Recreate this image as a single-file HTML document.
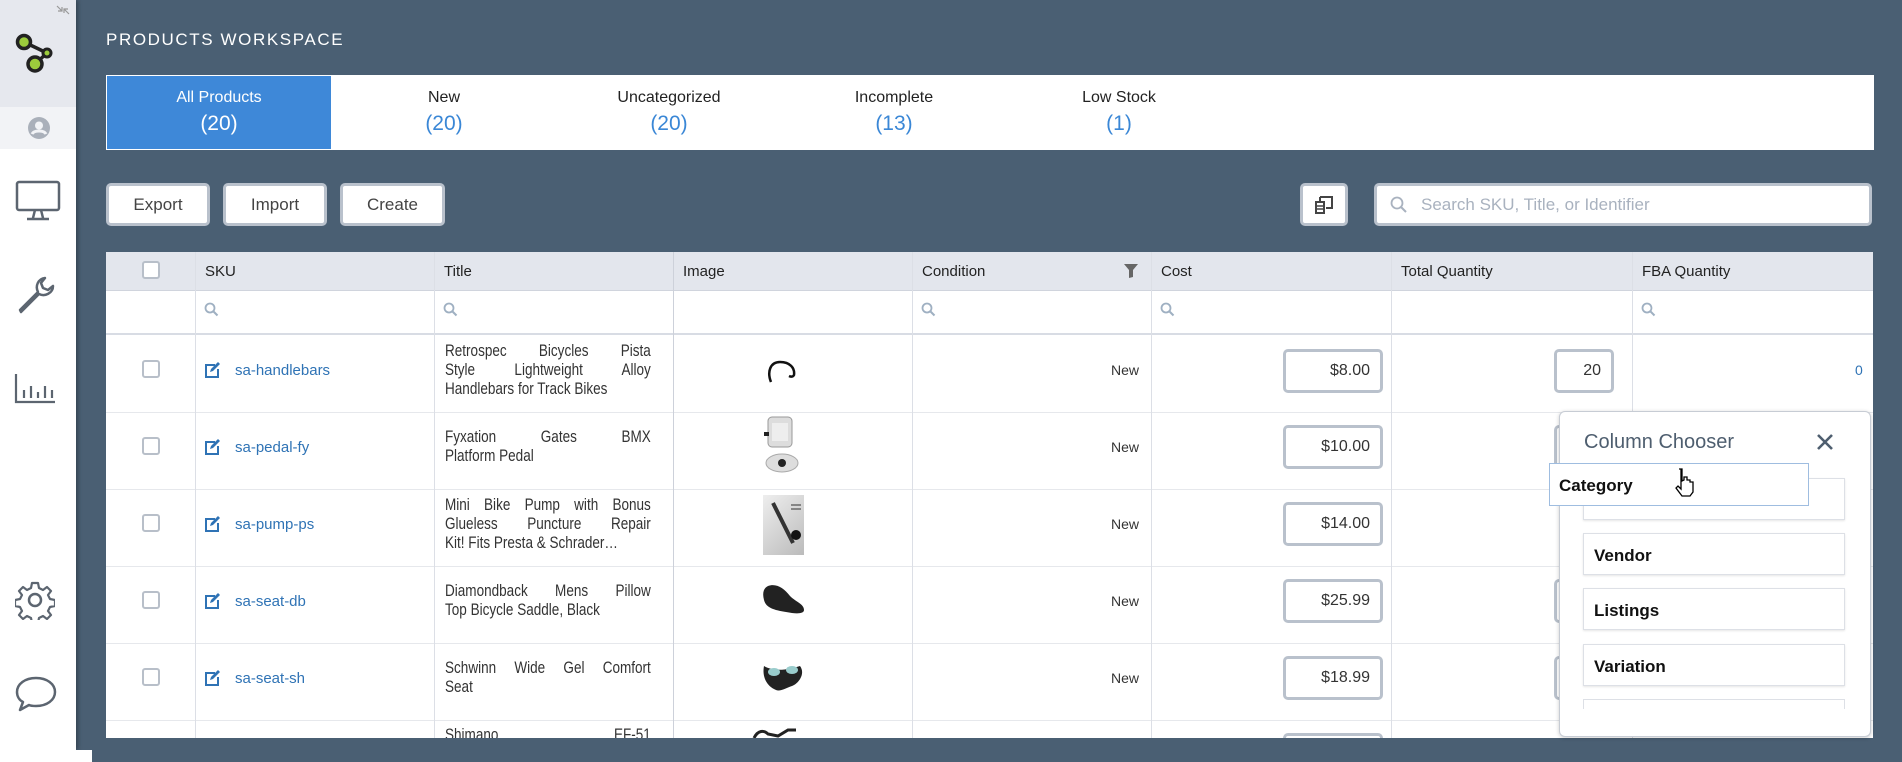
<!DOCTYPE html>
<html><head><style>
*{box-sizing:border-box;margin:0;padding:0}
body{width:1902px;height:762px;background:#4a5f73;font-family:"Liberation Sans",sans-serif;position:relative;overflow:hidden}
.a{position:absolute}
#side{left:0;top:0;width:76px;height:750px;background:#fff;box-shadow:2px 0 4px rgba(0,0,0,.3)}
.title{left:106px;top:30px;color:#fff;font-size:17px;letter-spacing:1.6px}
.tabs{left:106px;top:75px;width:1768px;height:75px;background:#fff;border:1px solid #fff}
.tab{top:0;height:73px;width:224px;text-align:center;font-size:16px;color:#222;padding-top:13px}
.tab b{display:block;font-weight:normal;font-size:21px;color:#3a87d6;margin-top:5px}
.btn{top:183px;height:43px;background:#fff;border:3px solid #b9c1cc;border-radius:5px;font-size:17px;color:#444;text-align:center;line-height:37px}
.tbl{left:106px;top:252px;width:1767px;height:486px;background:#fff;overflow:hidden}
.hd{left:0;top:0;width:100%;height:39px;background:#e3e6ed;border-bottom:1px solid #d0d4dd}
.fl{left:0;top:39px;width:100%;height:44px;border-bottom:2px solid #d8dce4}
.vl{top:0;width:1px;height:486px;background:#dcdfe6}
.hl{left:0;width:100%;height:1px;background:#e6e8ec}
.h{top:11px;font-size:15px;color:#222}
.cb{width:18px;height:18px;border:2px solid #b8bfc9;border-radius:3px;background:#fff}
.sku{font-size:15px;color:#2f73b5}
.tt{width:251px;font-size:16.5px;line-height:19px;color:#333;transform:scaleX(.82);transform-origin:0 0}
.tt div{text-align:justify;text-align-last:justify;white-space:nowrap}
.tt div.l{text-align-last:left}
.new{font-size:14px;color:#333}
.inp{height:44px;border:3px solid #b9c1cc;border-radius:5px;background:#fff;text-align:right;padding-right:10px;line-height:38px;font-size:16px;color:#333}
.ci{left:1583px;width:262px;height:42px;background:#fff;border:1px solid #dde0e6;box-shadow:0 1px 2px rgba(0,0,0,.1);font-size:17px;font-weight:bold;color:#111;padding:12px 0 0 10px}
</style></head><body>
<div id="side" class="a">
 <div class="a" style="left:0;top:0;width:76px;height:107px;background:#e6e8ee"></div>
 <div class="a" style="left:0;top:107px;width:76px;height:42px;background:#f2f3f6"></div>
 <svg class="a" style="left:55px;top:4px" width="16" height="12"><path d="M2 2l5 5M14 10l-5-5M7 3v4H3M9 9V5h4" stroke="#999" fill="none" stroke-width="1.2"/></svg>
 <svg class="a" style="left:15px;top:33px" width="40" height="40"><path d="M9 9L32 20M32 20L20 31" stroke="#222" stroke-width="3.5"/><circle cx="9" cy="9" r="6.5" fill="#9ccc3c" stroke="#222" stroke-width="3.5"/><circle cx="32" cy="20" r="4" fill="#9ccc3c" stroke="#222" stroke-width="3"/><circle cx="20" cy="31" r="7" fill="#9ccc3c" stroke="#222" stroke-width="3.5"/></svg>
 <svg class="a" style="left:27px;top:116px" width="24" height="24"><circle cx="12" cy="12" r="11" fill="#aab0ba"/><circle cx="12" cy="9.5" r="4" fill="#f2f3f6"/><path d="M5 18c2-4 12-4 14 0" stroke="#f2f3f6" stroke-width="3" fill="none"/></svg>
 <svg class="a" style="left:15px;top:180px" width="46" height="42"><rect x="2" y="2" width="42" height="28" rx="2" fill="none" stroke="#5c6570" stroke-width="2.5"/><path d="M20 30l-2 8M26 30l2 8M12 39h22" stroke="#5c6570" stroke-width="2.5"/></svg>
 <svg class="a" style="left:14px;top:272px" width="44" height="44"><path d="M6 38l18-18c-3-6 0-13 7-14l-4 5 2 5 5 2 5-4c0 7-8 11-14 8L7 40z" fill="none" stroke="#5c6570" stroke-width="2.5" stroke-linejoin="round"/></svg>
 <svg class="a" style="left:14px;top:372px" width="42" height="32"><path d="M2 2v28h39" stroke="#5c6570" stroke-width="2.2" fill="none"/><path d="M10 26v-8M17 26v-12M24 26v-6M31 26v-12M38 26v-8" stroke="#5c6570" stroke-width="2.2"/></svg>
 <svg class="a" style="left:15px;top:580px" width="40" height="40"><circle cx="20" cy="20" r="6" fill="none" stroke="#5c6570" stroke-width="2.5"/><path d="M17 3h6l1 5 4 2 4-3 4 4-3 4 2 4 5 1v6l-5 1-2 4 3 4-4 4-4-3-4 2-1 5h-6l-1-5-4-2-4 3-4-4 3-4-2-4-5-1v-6l5-1 2-4-3-4 4-4 4 3 4-2z" fill="none" stroke="#5c6570" stroke-width="2.2" stroke-linejoin="round"/></svg>
 <svg class="a" style="left:14px;top:675px" width="44" height="38"><path d="M22 3C11 3 3 9 3 17c0 4 2 8 6 10l-3 8 9-5c2 1 5 1 7 1 11 0 19-6 19-14S33 3 22 3z" fill="none" stroke="#5c6570" stroke-width="2.5" stroke-linejoin="round"/></svg>
</div>
<div class="a title">PRODUCTS WORKSPACE</div>
<div class="a tabs">
 <div class="a tab" style="left:0;background:#3e88d8;color:#fff">All Products<b style="color:#fff">(20)</b></div>
 <div class="a tab" style="left:225px">New<b>(20)</b></div>
 <div class="a tab" style="left:450px">Uncategorized<b>(20)</b></div>
 <div class="a tab" style="left:675px">Incomplete<b>(13)</b></div>
 <div class="a tab" style="left:900px">Low Stock<b>(1)</b></div>
</div>
<div class="a btn" style="left:106px;width:104px">Export</div>
<div class="a btn" style="left:223px;width:104px">Import</div>
<div class="a btn" style="left:340px;width:105px">Create</div>
<div class="a btn" style="left:1300px;width:48px;top:183px"><svg style="margin-top:9px" width="20" height="20"><path d="M6 2h12v11h-6M6 2v4" stroke="#444" stroke-width="2" fill="none"/><rect x="2" y="7" width="8" height="11" fill="none" stroke="#444" stroke-width="2"/><path d="M2 11h8M2 14h8" stroke="#444" stroke-width="1.5"/></svg></div>
<div class="a btn" style="left:1374px;width:498px;text-align:left;padding-left:44px;color:#a9b2bf;font-size:17px">Search SKU, Title, or Identifier
 <svg class="a" style="left:13px;top:10px" width="18" height="18"><circle cx="7" cy="7" r="5.5" fill="none" stroke="#a9b2bf" stroke-width="1.8"/><path d="M11 11l5 5" stroke="#a9b2bf" stroke-width="2"/></svg></div>

<div class="a tbl">
 <div class="a hd"></div><div class="a fl"></div>
 <div class="a hl" style="top:160px"></div><div class="a hl" style="top:237px"></div><div class="a hl" style="top:314px"></div><div class="a hl" style="top:391px"></div><div class="a hl" style="top:468px"></div>
 <div class="a vl" style="left:89px"></div><div class="a vl" style="left:328px"></div><div class="a vl" style="left:567px;background:#cdd1da"></div><div class="a vl" style="left:806px"></div><div class="a vl" style="left:1045px"></div><div class="a vl" style="left:1285px"></div><div class="a vl" style="left:1526px"></div>
 <div class="a cb" style="left:36px;top:9px"></div>
 <div class="a h" style="left:99px">SKU</div><div class="a h" style="left:338px">Title</div><div class="a h" style="left:577px">Image</div><div class="a h" style="left:816px">Condition</div><div class="a h" style="left:1055px">Cost</div><div class="a h" style="left:1295px">Total Quantity</div><div class="a h" style="left:1536px">FBA Quantity</div>
 <svg class="a" style="left:1018px;top:12px" width="14" height="14"><path d="M0 0h14l-5 6v7l-4 1V6z" fill="#666"/></svg>
 <div class="a" style="left:1177px;top:481px;width:100px;height:10px;border:3px solid #b9c1cc;border-radius:5px"></div>
</div>
<svg class="a" style="left:204px;top:302px" width="16" height="16"><circle cx="6" cy="6" r="4.5" fill="none" stroke="#9fb0c2" stroke-width="1.8"/><path d="M9.5 9.5l4 4" stroke="#9fb0c2" stroke-width="2"/></svg>
<svg class="a" style="left:443px;top:302px" width="16" height="16"><circle cx="6" cy="6" r="4.5" fill="none" stroke="#9fb0c2" stroke-width="1.8"/><path d="M9.5 9.5l4 4" stroke="#9fb0c2" stroke-width="2"/></svg>
<svg class="a" style="left:921px;top:302px" width="16" height="16"><circle cx="6" cy="6" r="4.5" fill="none" stroke="#9fb0c2" stroke-width="1.8"/><path d="M9.5 9.5l4 4" stroke="#9fb0c2" stroke-width="2"/></svg>
<svg class="a" style="left:1160px;top:302px" width="16" height="16"><circle cx="6" cy="6" r="4.5" fill="none" stroke="#9fb0c2" stroke-width="1.8"/><path d="M9.5 9.5l4 4" stroke="#9fb0c2" stroke-width="2"/></svg>
<svg class="a" style="left:1641px;top:302px" width="16" height="16"><circle cx="6" cy="6" r="4.5" fill="none" stroke="#9fb0c2" stroke-width="1.8"/><path d="M9.5 9.5l4 4" stroke="#9fb0c2" stroke-width="2"/></svg>

<div class="a cb" style="left:142px;top:360px"></div><div class="a cb" style="left:142px;top:437px"></div><div class="a cb" style="left:142px;top:514px"></div><div class="a cb" style="left:142px;top:591px"></div><div class="a cb" style="left:142px;top:668px"></div>
<svg class="a" style="left:204px;top:362px" width="16" height="16"><path d="M11 3H2v12h12V7" fill="none" stroke="#2f73b5" stroke-width="2"/><path d="M6 10l1-3 7-7 2 2-7 7z" fill="#2f73b5"/></svg>
<svg class="a" style="left:204px;top:439px" width="16" height="16"><path d="M11 3H2v12h12V7" fill="none" stroke="#2f73b5" stroke-width="2"/><path d="M6 10l1-3 7-7 2 2-7 7z" fill="#2f73b5"/></svg>
<svg class="a" style="left:204px;top:516px" width="16" height="16"><path d="M11 3H2v12h12V7" fill="none" stroke="#2f73b5" stroke-width="2"/><path d="M6 10l1-3 7-7 2 2-7 7z" fill="#2f73b5"/></svg>
<svg class="a" style="left:204px;top:593px" width="16" height="16"><path d="M11 3H2v12h12V7" fill="none" stroke="#2f73b5" stroke-width="2"/><path d="M6 10l1-3 7-7 2 2-7 7z" fill="#2f73b5"/></svg>
<svg class="a" style="left:204px;top:670px" width="16" height="16"><path d="M11 3H2v12h12V7" fill="none" stroke="#2f73b5" stroke-width="2"/><path d="M6 10l1-3 7-7 2 2-7 7z" fill="#2f73b5"/></svg>
<div class="a sku" style="left:235px;top:362px">sa-handlebars</div>
<div class="a sku" style="left:235px;top:439px">sa-pedal-fy</div>
<div class="a sku" style="left:235px;top:516px">sa-pump-ps</div>
<div class="a sku" style="left:235px;top:593px">sa-seat-db</div>
<div class="a sku" style="left:235px;top:670px">sa-seat-sh</div>
<div class="a tt" style="left:445px;top:342px"><div>Retrospec Bicycles Pista</div><div>Style Lightweight Alloy</div><div class="l">Handlebars for Track Bikes</div></div>
<div class="a tt" style="left:445px;top:428px"><div>Fyxation Gates BMX</div><div class="l">Platform Pedal</div></div>
<div class="a tt" style="left:445px;top:496px"><div>Mini Bike Pump with Bonus</div><div>Glueless Puncture Repair</div><div class="l">Kit! Fits Presta &amp; Schrader…</div></div>
<div class="a tt" style="left:445px;top:582px"><div>Diamondback Mens Pillow</div><div class="l">Top Bicycle Saddle, Black</div></div>
<div class="a tt" style="left:445px;top:659px"><div>Schwinn Wide Gel Comfort</div><div class="l">Seat</div></div>
<div class="a tt" style="left:445px;top:726px;height:12px;overflow:hidden"><div>Shimano EF-51</div></div>
<svg class="a" style="left:762px;top:358px" width="40" height="30"><path d="M9 24C5 14 8 4 18 4s15 6 14 13c-1 2-3 2-5 1" fill="none" stroke="#111" stroke-width="2.5"/></svg>
<svg class="a" style="left:760px;top:415px" width="44" height="62"><rect x="8" y="2" width="24" height="30" rx="4" fill="#ddd" stroke="#999"/><rect x="12" y="8" width="16" height="18" fill="#eee"/><ellipse cx="22" cy="48" rx="16" ry="9" fill="#ddd" stroke="#aaa"/><circle cx="22" cy="48" r="4" fill="#222"/><rect x="4" y="17" width="5" height="4" fill="#222"/></svg>
<div class="a" style="left:763px;top:495px;width:41px;height:60px;background:linear-gradient(135deg,#eee,#bbb)"><svg width="41" height="60"><path d="M10 8l20 40" stroke="#333" stroke-width="4"/><path d="M28 10h10M28 14h10" stroke="#333"/><circle cx="33" cy="40" r="5" fill="#111"/></svg></div>
<svg class="a" style="left:760px;top:582px" width="46" height="36"><path d="M8 4c8-3 16 2 22 10 6 6 14 8 14 14 0 4-8 4-18 2C14 28 6 26 4 18 2 10 4 6 8 4z" fill="#222"/></svg>
<svg class="a" style="left:760px;top:658px" width="46" height="40"><path d="M4 8c10 6 24 4 36 0 6 8-2 18-8 20-6 2-12 6-16 4C6 28 2 18 4 8z" fill="#222"/><ellipse cx="14" cy="14" rx="6" ry="4" fill="#9cc"/><ellipse cx="32" cy="12" rx="6" ry="4" fill="#9cc"/></svg>
<svg class="a" style="left:752px;top:728px" width="60" height="10"><path d="M2 10c4-8 10-8 14-4l10 2 10-6h8" stroke="#222" stroke-width="3" fill="none"/></svg>
<div class="a new" style="left:1111px;top:362px">New</div><div class="a new" style="left:1111px;top:439px">New</div><div class="a new" style="left:1111px;top:516px">New</div><div class="a new" style="left:1111px;top:593px">New</div><div class="a new" style="left:1111px;top:670px">New</div>
<div class="a inp" style="left:1283px;top:349px;width:100px">$8.00</div>
<div class="a inp" style="left:1283px;top:425px;width:100px">$10.00</div>
<div class="a inp" style="left:1283px;top:502px;width:100px">$14.00</div>
<div class="a inp" style="left:1283px;top:579px;width:100px">$25.99</div>
<div class="a inp" style="left:1283px;top:656px;width:100px">$18.99</div>
<div class="a inp" style="left:1554px;top:349px;width:60px">20</div>
<div class="a inp" style="left:1554px;top:425px;width:60px"></div><div class="a inp" style="left:1554px;top:579px;width:60px"></div><div class="a inp" style="left:1554px;top:656px;width:60px"></div>
<div class="a" style="left:1855px;top:362px;font-size:14px;color:#2f73b5">0</div>
<div class="a" style="left:1559px;top:411px;width:312px;height:326px;background:#fff;border:1px solid #c7ccd4;border-radius:6px;box-shadow:0 1px 4px rgba(0,0,0,.2)"></div>
<div class="a" style="left:1584px;top:431px;font-size:20px;color:#4e5e6f">Column Chooser</div>
<svg class="a" style="left:1816px;top:433px" width="18" height="18"><path d="M2 2l14 14M16 2L2 16" stroke="#4e5e6f" stroke-width="2.6"/></svg>
<div class="a ci" style="top:478px"></div>
<div class="a ci" style="top:533px">Vendor</div>
<div class="a ci" style="top:588px">Listings</div>
<div class="a ci" style="top:644px">Variation</div>
<div class="a" style="left:1583px;top:699px;width:262px;height:10px;border:1px solid #dde0e6;border-bottom:none"></div>
<div class="a" style="left:1549px;top:463px;width:260px;height:43px;background:#fff;border:1px solid #9fbde0;font-size:17px;font-weight:bold;color:#111;padding:12px 0 0 9px">Category</div>
<svg class="a" style="left:1673px;top:467px" width="26" height="30"><path d="M6 2h3v12l2-1v-3h3v3h3v2h3v10l-3 4H9l-6-8 2-2 3 3V2z" fill="#fff" stroke="#000" stroke-width="1.3"/></svg>
<div class="a" style="left:0;top:750px;width:92px;height:12px;background:#fff"></div>
</body></html>
